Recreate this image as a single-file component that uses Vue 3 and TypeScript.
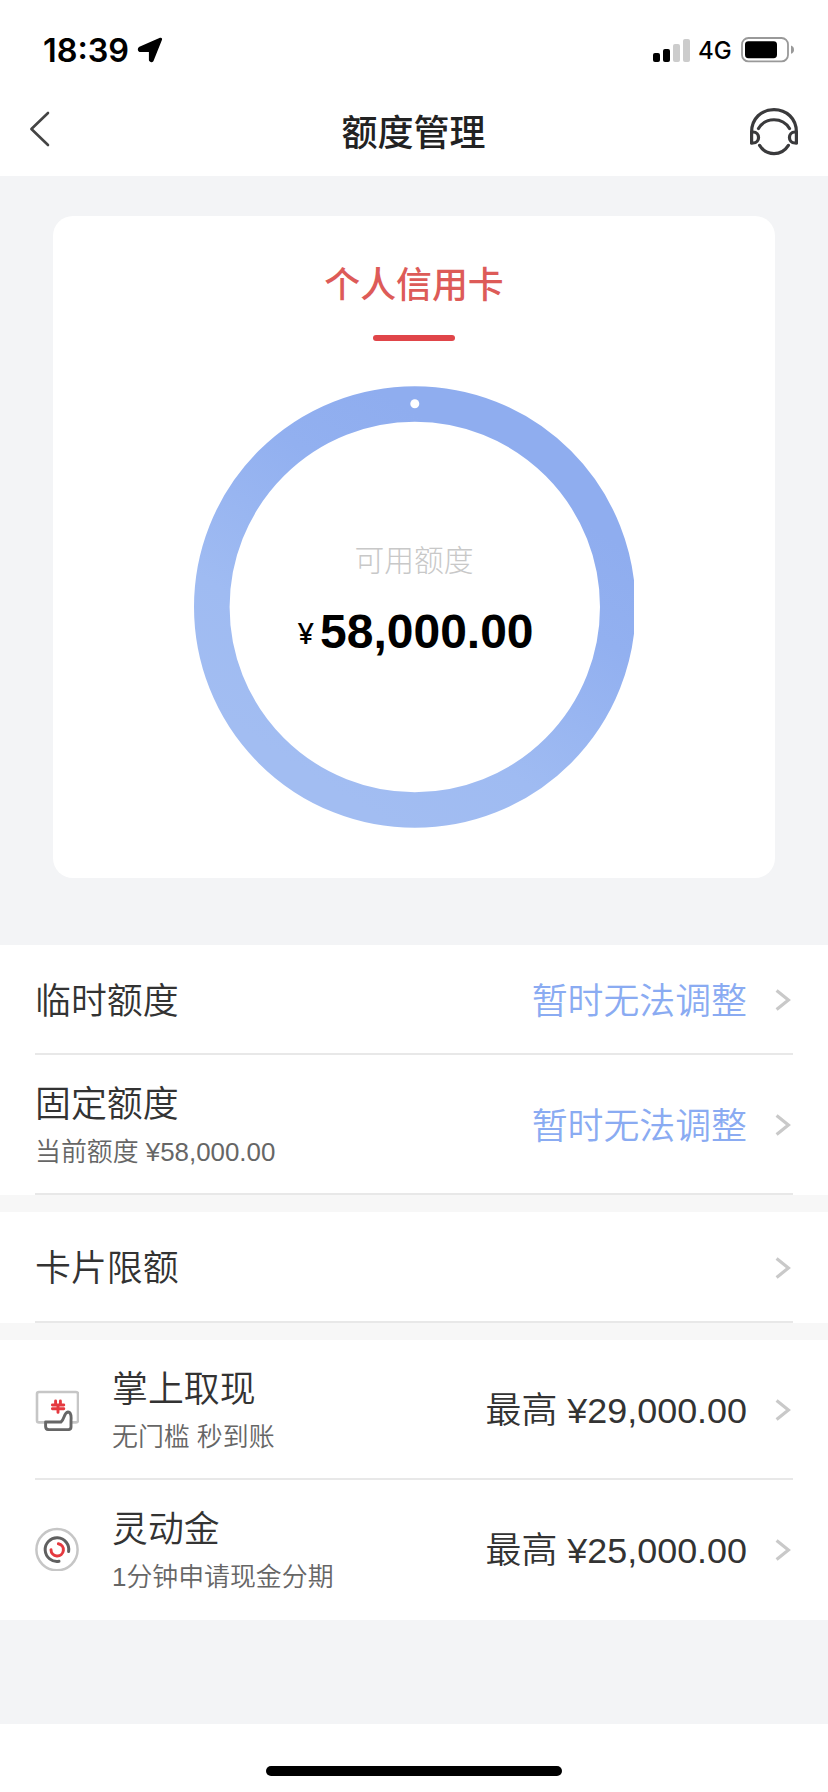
<script setup lang="ts">
interface LimitRow {
  title: string
  note?: string
  value?: string
  muted?: boolean
  icon?: 'cash' | 'flex'
}

const groups: LimitRow[][] = [
  [
    { title: '临时额度', value: '暂时无法调整', muted: true },
    { title: '固定额度', note: '当前额度 ¥58,000.00', value: '暂时无法调整', muted: true },
  ],
  [{ title: '卡片限额' }],
  [
    { title: '掌上取现', note: '无门槛 秒到账', value: '最高 ¥29,000.00', icon: 'cash' },
    { title: '灵动金', note: '1分钟申请现金分期', value: '最高 ¥25,000.00', icon: 'flex' },
  ],
]
</script>

<template>
  <div class="screen">
    <header class="top">
      <div class="status">
        <span class="time">18:39</span>
        <svg class="locate" width="26" height="26" viewBox="0 0 26 26">
          <path d="M23.6 2.2 L15.2 23.2 Q14.4 24.2 13.4 23 V13.6 H3 Q1.6 12.4 3 11.2 Z" fill="#000" stroke="#000" stroke-width="3" stroke-linejoin="round" />
        </svg>
        <span class="grow"></span>
        <svg class="signal" width="37" height="23" viewBox="0 0 37 23">
          <rect x="0" y="14" width="7" height="9" rx="2" />
          <rect x="10" y="10" width="7" height="13" rx="2" />
          <rect x="20" y="5" width="7" height="18" rx="2" fill="#ccc" />
          <rect x="30" y="0" width="7" height="23" rx="2" fill="#ccc" />
        </svg>
        <span class="network">4G</span>
        <svg class="battery" width="54" height="26" viewBox="0 0 54 26">
          <rect x="1" y="1" width="46" height="23.4" rx="6.5" fill="none" stroke="#999" stroke-width="1.8" />
          <rect x="4" y="4.2" width="32" height="17" rx="3.4" />
          <path d="M50 8.6 Q53 9.6 53 12.7 Q53 15.8 50 16.8 Z" fill="#999" />
        </svg>
      </div>
      <nav class="nav">
        <svg class="back" width="22" height="36" viewBox="0 0 22 36">
          <path d="M20 2 L3.4 18 L20 34" fill="none" stroke="#444" stroke-width="2.6" stroke-linecap="round" stroke-linejoin="round" />
        </svg>
        <h1>额度管理</h1>
        <svg width="50" height="50" viewBox="0 0 50 50" fill="none" stroke="#3a3a3c" stroke-width="3.2" stroke-linecap="round" stroke-linejoin="round">
          <path d="M2.6 36 V25 C2.6 11.5 12.5 2.6 25 2.6 C37.5 2.6 47.4 11.5 47.4 25 V36" />
          <path d="M9.5 21.5 C16.5 9.8 33.5 9.8 40.5 21.5" />
          <path d="M2.6 25 H4 C11.4 25 11.4 36 4 36 H2.6" />
          <path d="M47.4 25 H46 C38.6 25 38.6 36 46 36 H47.4" />
          <path d="M10.6 38.4 C17.5 49.4 32.5 49.4 39.4 38.4" />
        </svg>
      </nav>
    </header>

    <section class="hero">
      <div class="card">
        <h2>个人信用卡</h2>
        <i class="underline"></i>
        <div class="gauge">
          <svg width="440" height="442" viewBox="0 0 440 442">
            <defs>
              <linearGradient id="ring" x1="0.78" y1="0.2" x2="0.3" y2="0.95">
                <stop offset="0" stop-color="#8fadef" />
                <stop offset="0.25" stop-color="#92b0f0" />
                <stop offset="0.7" stop-color="#9fbbf2" />
                <stop offset="1" stop-color="#a2bdf2" />
              </linearGradient>
            </defs>
            <circle cx="220.8" cy="221" r="203" fill="none" stroke="url(#ring)" stroke-width="35.6" />
            <circle cx="220.8" cy="17.7" r="4.5" fill="#fff" />
          </svg>
          <div class="amount">
            <span class="label">可用额度</span>
            <span class="sum"><small>¥</small>58,000.00</span>
          </div>
        </div>
      </div>
    </section>

    <main>
      <ul v-for="(rows, g) in groups" :key="g" class="group">
        <li v-for="row in rows" :key="row.title" class="row" :class="{ tall: row.note }">
          <svg v-if="row.icon === 'cash'" class="icon" width="44" height="44" viewBox="0 0 44 44" fill="none" stroke-linecap="round" stroke-linejoin="round">
            <rect x="2" y="5" width="41" height="30.4" rx="2" stroke="#c6c6c6" stroke-width="2.6" />
            <path d="M10.6 35 H26 C29.5 32.5 28.8 25.6 33 25 C37.2 25.4 36 31 36 34 V40 Q36 42.6 33.4 42.6 H14 Q10.6 42.6 10.6 39.4 Z" fill="#fff" stroke="#666" stroke-width="2.9" />
            <path d="M20.6 14 V18 M25.4 14 V18 M17.4 18 H28.8 M17.4 21.8 H28.8 M23 18 V25.4" stroke="#e5393f" stroke-width="2.9" />
          </svg>
          <svg v-else-if="row.icon === 'flex'" class="icon" width="44" height="44" viewBox="0 0 44 44" fill="none" stroke-linecap="round">
            <circle cx="22" cy="22.7" r="20.6" stroke="#c6c6c6" stroke-width="2.5" />
            <path d="M33.6 24.6 A11.8 11.8 0 1 0 24 34.2" stroke="#606060" stroke-width="3" />
            <path d="M23.4 16.7 A6.2 6.2 0 1 1 16 22.8" stroke="#e5393f" stroke-width="3" />
          </svg>
          <div class="text">
            <span class="title">{{ row.title }}</span>
            <span v-if="row.note" class="note">{{ row.note }}</span>
          </div>
          <span v-if="row.value" class="value" :class="{ muted: row.muted }">{{ row.value }}</span>
          <svg class="arrow" width="16" height="22" viewBox="0 0 16 22">
            <path d="M1.6 1.6 L13.4 11 L1.6 20.4" fill="none" stroke="#c9c9c9" stroke-width="3.2" />
          </svg>
        </li>
      </ul>
    </main>

    <footer><i class="home"></i></footer>
  </div>
</template>

<style>
body {
  margin: 0;
  background: #f3f4f6;
}
</style>

<style scoped>
.screen {
  display: flex;
  flex-direction: column;
  width: 828px;
  height: 1792px;
  overflow: hidden;
  background: #f3f4f6;
  color: #333;
  font-family: "Liberation Sans", "Noto Sans CJK SC", sans-serif;
}
svg {
  display: block;
  flex: none;
}
.top {
  height: 176px;
  background: #fff;
}
.status {
  display: flex;
  align-items: center;
  height: 100px;
  box-sizing: border-box;
  padding: 0 33px 0 43px;
  color: #000;
  font-family: Inter, sans-serif;
}
.time {
  width: 94px;
  font-size: 32.4px;
  font-weight: 600;
  white-space: nowrap;
}
.grow {
  flex: 1;
}
.network {
  width: 35px;
  margin-top: 1px;
  padding-left: 8px;
  font-size: 24px;
  font-weight: 500;
}
.battery {
  margin-left: 8px;
}
.nav {
  display: flex;
  align-items: center;
  justify-content: space-between;
  height: 64px;
  padding: 0 29px 0 28px;
}
.back {
  margin-bottom: 7px;
}
.nav h1 {
  margin: 0 0 0 28px;
  padding-top: 4px;
  color: #222;
  font-size: 36px;
  font-weight: 500;
  line-height: 60px;
}
.hero {
  height: 769px;
  padding: 40px 53px 0;
  box-sizing: border-box;
}
.card {
  display: flex;
  flex-direction: column;
  align-items: center;
  height: 662px;
  border-radius: 20px;
  background: #fff;
}
.card h2 {
  margin: 44px 0 0;
  color: #dd5b58;
  font-size: 35.9px;
  font-weight: 500;
  line-height: 52px;
}
.underline {
  width: 82px;
  height: 6px;
  margin-top: 23px;
  border-radius: 3px;
  background: #e04549;
}
.gauge {
  display: grid;
  margin-top: 45px;
}
.gauge > * {
  grid-area: 1 / 1;
}
.amount {
  display: flex;
  flex-direction: column;
  align-items: center;
  padding-top: 155px;
}
.label {
  color: #c8c8c8;
  font-size: 29.8px;
  font-weight: 300;
  line-height: 40px;
}
.sum {
  display: flex;
  align-items: center;
  margin: 20px 0 0 3px;
  color: #000;
  font-size: 48px;
  font-weight: 700;
  line-height: 60px;
}
.sum small {
  margin: 2px 6px 0 0;
  font-family: "Noto Sans", sans-serif;
  font-size: 29px;
  font-weight: 500;
}
.group {
  margin: 0 0 17px;
  padding: 0 35px;
  list-style: none;
  background: #fff;
}
main {
  background: #f7f7f7;
}
.group:last-child {
  margin-bottom: 0;
}
.row {
  display: flex;
  align-items: center;
  height: 109px;
  border-bottom: 2px solid #e8e8e8;
}
.group:first-child .row:first-child {
  height: 108px;
}
.row.tall {
  height: 138px;
}
.group:last-child .row:last-child {
  border-bottom-color: #fff;
}
.icon {
  margin-right: 33px;
}
.text {
  display: flex;
  flex: 1;
  flex-direction: column;
  padding-top: 5px;
}
.tall .text {
  padding-top: 3px;
}
.title {
  font-size: 35.9px;
  font-weight: 350;
  line-height: 52px;
}
.note {
  margin-top: 1px;
  color: #666;
  font-size: 25.9px;
  font-weight: 350;
  line-height: 40px;
}
.value {
  padding-top: 4px;
  font-size: 35.9px;
  font-weight: 350;
  line-height: 52px;
}
.value.muted {
  padding-top: 6px;
  color: #8aabf2;
}
.arrow {
  margin: 2px 2px 0 28px;
}
footer {
  display: flex;
  justify-content: center;
  height: 68px;
  margin-top: auto;
  background: #fff;
}
.home {
  width: 296px;
  height: 10px;
  margin-top: 42px;
  border-radius: 5px;
  background: #000;
}
</style>
